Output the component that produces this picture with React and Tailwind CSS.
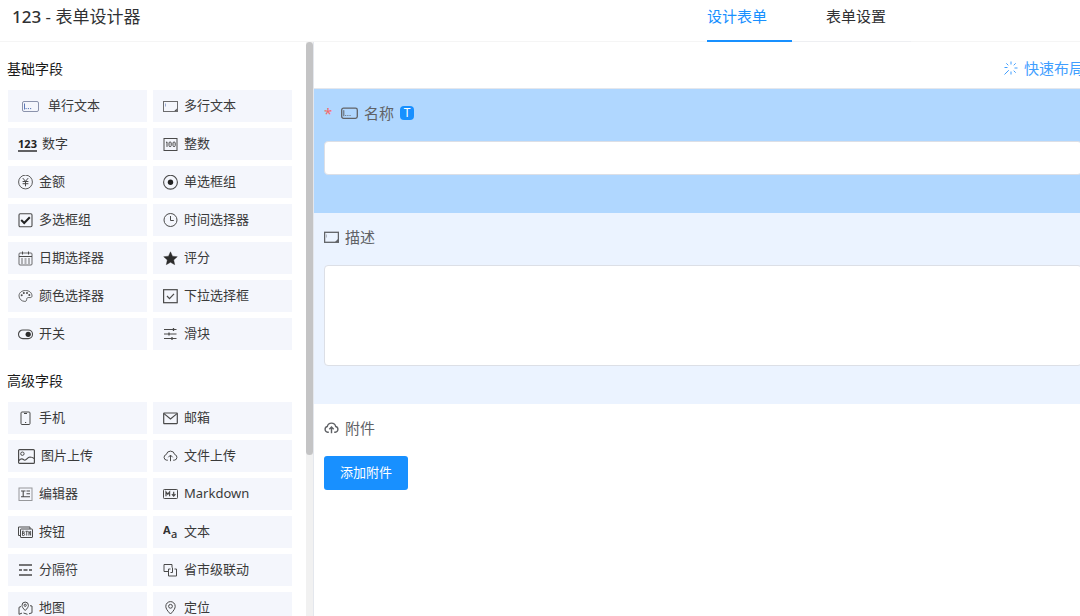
import React from "react";

function Svg({ w = 15, h = 15, children, className = "" }) {
  return (
    <svg
      aria-hidden="true"
      width={w}
      height={h}
      viewBox={`0 0 ${w} ${h}`}
      fill="none"
      stroke="currentColor"
      strokeWidth="1"
      className={`shrink-0 ${className}`}
    >
      {children}
    </svg>
  );
}

const SingleLineWide = () => (
  <Svg w={24} h={15}>
    <rect x="4.5" y="2.5" width="16" height="10" rx="1.5" stroke="#8b93ac" />
    <path d="M6.5 4.5v6" stroke="#5b78b8" />
    <path d="M7.5 9.6h1.2M9.8 9.6h1.2M12 9.6h1.2" stroke="#5b78b8" />
  </Svg>
);

const SingleLine = () => (
  <Svg w={17} h={15}>
    <rect x="0.7" y="2.2" width="15.6" height="10.2" rx="1.8" strokeWidth="1.3" />
    <path d="M2.8 4.2v6" />
    <path d="M4 9.5h1.3M6.2 9.5h1.3M8.4 9.5h1.3" strokeOpacity="0.7" />
  </Svg>
);

const MultiLine = () => (
  <Svg>
    <rect x="0.5" y="2.5" width="14" height="10" strokeOpacity="0.8" />
    <path d="M2.5 4.5v3" strokeOpacity="0.6" stroke="#5b78b8" />
    <path d="M13.8 9.6v2.4h-2.4z" fill="currentColor" stroke="none" />
  </Svg>
);

const MultiLineBold = () => (
  <Svg>
    <rect x="0.6" y="2.3" width="13.8" height="10" strokeWidth="1.3" />
    <path d="M2.5 4.5v3" strokeOpacity="0.4" />
    <path d="M14 9v3h-3z" fill="currentColor" stroke="none" />
  </Svg>
);

const NumberIcon = () => (
  <Svg w={20} h={17} className="-mr-0.5 text-[#222]">
    <text
      x="9.5"
      y="12"
      textAnchor="middle"
      fontFamily="'Open Sans', sans-serif"
      fontSize="11"
      fontWeight="700"
      fill="currentColor"
      stroke="none"
    >
      123
    </text>
    <path d="M0 15h19" strokeWidth="1.4" />
  </Svg>
);

const IntegerIcon = () => (
  <Svg>
    <rect x="1" y="1.5" width="13" height="12" />
    <path d="M3 5.6l1-.7v5" />
    <rect x="6" y="5" width="2.2" height="4.6" rx="1" />
    <rect x="10" y="5" width="2.2" height="4.6" rx="1" />
  </Svg>
);

const MoneyIcon = () => (
  <Svg>
    <circle cx="7.5" cy="7" r="6.900" strokeOpacity="0.9" />
    <path d="M4.8 3.1l2.7 3.2 2.7-3.2M4.6 6.500h5.8M4.6 8.700h5.8M7.5 6.300v5" />
  </Svg>
);

const RadioIcon = () => (
  <Svg>
    <circle cx="7.5" cy="7.2" r="6.9" strokeWidth="1.1" />
    <circle cx="7.5" cy="7.2" r="2.7" fill="#222" stroke="none" />
  </Svg>
);

const CheckboxIcon = () => (
  <Svg>
    <rect x="1" y="0.800" width="13" height="13" rx="1.2" strokeWidth="1.1" />
    <path d="M3.2 7l3 3 5.6-5.8" strokeWidth="2" stroke="#222" />
  </Svg>
);

const ClockIcon = () => (
  <Svg>
    <circle cx="7.5" cy="7" r="6.5" />
    <path d="M7.5 3v4.5h3.3" />
  </Svg>
);

const CalendarIcon = () => (
  <Svg>
    <rect x="1" y="2" width="13" height="12" rx="1" strokeOpacity="0.8" />
    <path d="M1 5.5h13M4.5 0.5v3M10.500 0.5v3" />
    <path d="M3 8h9.500M3 10h9.500M3 12h9.500" strokeDasharray="2 1.5" strokeOpacity="0.8" />
  </Svg>
);

const StarIcon = () => (
  <Svg>
    <path
      d="M7.5 0.800l2 4.400 4.800.5-3.600 3.200 1 4.800-4.200-2.400-4.200 2.400 1-4.800L.7 5.700l4.800-.5z"
      fill="#2c2c2c"
      stroke="#2c2c2c"
      strokeWidth="0.4"
    />
  </Svg>
);

const PaletteIcon = () => (
  <Svg>
    <path d="M7.500 1.500C3.800 1.500 1 3.800 1 6.800s2.600 5.600 5.800 5.600c2.200 0 1.700-1.700 1.900-2.600.3-1.300 1.700-1.400 3.200-1.200 1.300.1 2.100-.5 2.100-1.700C14 3.700 11.200 1.500 7.500 1.500z" strokeOpacity="0.85" />
    <g fill="currentColor" stroke="none">
      <circle cx="3.700" cy="6.300" r="1" />
      <circle cx="5.800" cy="4" r="1" />
      <circle cx="9" cy="3.900" r="1" />
      <circle cx="11.300" cy="5.900" r="1" />
    </g>
  </Svg>
);

const SelectIcon = () => (
  <Svg>
    <rect x="0.600" y="0.700" width="13.600" height="13" strokeWidth="1.200" />
    <path d="M4 7l2.500 2.600 4.500-4.800" strokeWidth="1.200" />
  </Svg>
);

const SwitchIcon = () => (
  <Svg>
    <rect x="0.500" y="3" width="14" height="8.600" rx="4.300" strokeWidth="1.100" />
    <circle cx="10.200" cy="7.300" r="2.600" fill="#2c2c2c" stroke="none" />
  </Svg>
);

const SliderIcon = () => (
  <Svg>
    <path d="M1 2.500h12.500M1 7h12.500M1 11.500h12.500" strokeWidth="1.100" />
    <path d="M10.500 1v3M6 5.500v3M9 10v3" strokeWidth="1.300" />
  </Svg>
);

const PhoneIcon = () => (
  <Svg>
    <rect x="3" y="1" width="9" height="12.500" rx="1" />
    <path d="M6 2.500h3M7 11.500h1.200" />
  </Svg>
);

const MailIcon = () => (
  <Svg>
    <rect x="0.700" y="2" width="13.600" height="10.600" rx="0.500" strokeWidth="1.200" />
    <path d="M1 2.600l6.500 5.400L14 2.600" strokeWidth="1.200" />
  </Svg>
);

const ImageIcon = () => (
  <Svg w={17}>
    <rect x="0.600" y="0.600" width="15.800" height="13.800" rx="1" strokeWidth="1.200" />
    <circle cx="4.400" cy="4.700" r="1.700" />
    <path d="M1 11.500c2-2.300 3.500-1.800 4.800-.8 2.600 1.800 3-2.600 6.200-2.700 1.800 0 3 .7 4.300 1.600" strokeWidth="1.200" />
  </Svg>
);

const CloudIcon = ({ width = 1 }) => (
  <Svg>
    <path
      d="M4.800 11.200H3.700a2.900 2.900 0 0 1-.4-5.700 4.300 4.300 0 0 1 8.400 0 2.900 2.900 0 0 1-.4 5.700h-1.100"
      strokeWidth={width}
    />
    <path d="M7.500 12.200v-6M5.300 8.300l2.200-2.200 2.200 2.200" strokeWidth={width} />
  </Svg>
);

const EditorIcon = () => (
  <Svg>
    <rect x="1" y="1" width="13" height="12.500" strokeOpacity="0.550" />
    <path d="M3 4h4.500M5.200 4v5.500M8.500 4h3.500M8.500 6.700h3.500M3 9.700h9" strokeWidth="1.100" />
  </Svg>
);

const MarkdownIcon = () => (
  <Svg>
    <rect x="0.500" y="2.500" width="14" height="9" rx="0.800" />
    <path d="M3 9.300V5l1.800 2.200 1.800-2.200v4.300" strokeWidth="1.200" />
    <path d="M10.700 4.700v4.200M8.900 7.200l1.800 1.900 1.800-1.900" strokeWidth="1.200" />
  </Svg>
);

const ButtonIcon = () => (
  <Svg>
    <path d="M2.500 10.500H.5v-8.500h11.500v2" />
    <rect x="2.500" y="4" width="12" height="8.500" rx="0.500" />
    <path d="M4.500 6v4.500h1.300c1.200 0 1-2.200 0-2.200H4.500h1c1 0 1-2.100 0-2.100zM7.500 6.300h2.400M8.700 6.300v4.300M10.900 10.600V6.300l1.700 4V6" strokeWidth="0.900" />
  </Svg>
);

const TextIcon = () => (
  <Svg w={15} h={22}>
    <g fill="#333" stroke="none" fontFamily="'Noto Sans', sans-serif">
      <text x="0" y="13" fontSize="11" fontWeight="700">
        A
      </text>
      <text x="8" y="17" fontSize="11" fontWeight="500">
        a
      </text>
    </g>
  </Svg>
);

const DividerIcon = () => (
  <Svg>
    <path d="M1 2h13M1 12h13" strokeWidth="1.400" />
    <path d="M1 7h3M5.500 7h4M11 7h3" strokeWidth="1.400" />
  </Svg>
);

const LinkageIcon = () => (
  <Svg>
    <path d="M5 8.500H1v-7h8v3" />
    <path d="M7.500 9.500h2v-5M7.500 6H5.500v7h8V6h-2" />
  </Svg>
);

const MapIcon = () => (
  <Svg>
    <path d="M7.200 9.500C5 7.300 4 5.900 4 4.300a3.200 3.200 0 0 1 6.400 0c0 1.600-1 3-3.200 5.200z" />
    <circle cx="7.200" cy="4.300" r="1.100" />
    <path d="M3 5.500L1 6.300v7l3-1.200M5.500 12l4 1.300M11 12.800l3-1V5l-2-.3" />
  </Svg>
);

const PinIcon = () => (
  <Svg>
    <path d="M7.500 13C4.300 9.800 2.800 7.500 2.800 5.300a4.700 4.700 0 0 1 9.400 0c0 2.200-1.500 4.500-4.700 7.700z" />
    <circle cx="7.500" cy="5.300" r="1.900" />
  </Svg>
);

const SparkIcon = () => (
  <Svg w={14} h={14}>
    <path d="M7 0.500v3M7 10.500v3M10.500 7h3M0.500 6.500h3M9.700 4.300l2-2M9.700 9.700l2 2M4.300 4.300l-2-2M4.800 9.200L0.500 13.500" />
  </Svg>
);

const groups = [
  {
    title: "基础字段",
    items: [
      ["单行文本", SingleLineWide],
      ["多行文本", MultiLine],
      ["数字", NumberIcon],
      ["整数", IntegerIcon],
      ["金额", MoneyIcon],
      ["单选框组", RadioIcon],
      ["多选框组", CheckboxIcon],
      ["时间选择器", ClockIcon],
      ["日期选择器", CalendarIcon],
      ["评分", StarIcon],
      ["颜色选择器", PaletteIcon],
      ["下拉选择框", SelectIcon],
      ["开关", SwitchIcon],
      ["滑块", SliderIcon],
    ],
  },
  {
    title: "高级字段",
    items: [
      ["手机", PhoneIcon],
      ["邮箱", MailIcon],
      ["图片上传", ImageIcon],
      ["文件上传", CloudIcon],
      ["编辑器", EditorIcon],
      ["Markdown", MarkdownIcon],
      ["按钮", ButtonIcon],
      ["文本", TextIcon],
      ["分隔符", DividerIcon],
      ["省市级联动", LinkageIcon],
      ["地图", MapIcon],
      ["定位", PinIcon],
    ],
  },
];

function FieldGroup({ title, items }) {
  return (
    <section>
      <h2 className="mb-[9px] px-[7px] text-sm leading-6 text-[#1a1a1a]">{title}</h2>
      <div className="grid grid-cols-2 gap-1.5 pr-3.5 pl-2">
        {items.map(([name, Icon]) => (
          <button
            key={name}
            type="button"
            className="flex h-8 cursor-move items-center gap-1.5 bg-[#f4f6fc] px-2.5 text-[13px] whitespace-nowrap text-[#4a4a4a]"
          >
            <Icon />
            <span className="text-[#3a3a3a]">{name}</span>
          </button>
        ))}
      </div>
    </section>
  );
}

export default function App() {
  return (
    <div className="flex h-screen flex-col overflow-hidden bg-white font-['Noto_Sans','Noto_Sans_CJK_SC',sans-serif] text-[#333]">
      <header className="flex h-[42px] shrink-0 items-stretch border-b border-[#f5f5f5]">
        <h1 className="pl-3 text-[17px] leading-[34px] whitespace-nowrap text-[#303133]">
          <span className="font-medium">123</span> - 表单设计器
        </h1>
        <nav className="mr-[169px] -mb-px ml-auto flex text-[15px] leading-8 whitespace-nowrap">
          <a href="#design" aria-current="page" className="border-b-2 border-[#1890ff] pr-[25px] text-[#1890ff]">
            设计表单
          </a>
          <a href="#settings" className="border-b border-[#eeeff2] pr-[25px] pl-[34px] text-[#303133]">
            表单设置
          </a>
        </nav>
      </header>

      <div className="flex min-h-0 flex-1">
        <aside className="flex w-[313px] shrink-0">
          <div className="flex min-w-0 flex-1 flex-col gap-[19px] overflow-hidden pt-[15px]">
            {groups.map((group) => (
              <FieldGroup key={group.title} {...group} />
            ))}
          </div>
          <div className="w-[7px] bg-[#f1f1f1]">
            <div className="h-[72%] rounded-sm bg-[#c4c4c5]" />
          </div>
        </aside>

        <main className="min-w-0 flex-1 overflow-hidden border-l border-[#e4e7ed]">
          <div className="-mr-1 flex h-[47px] items-center justify-end border-b border-[#e4e7ed] pt-1.5">
            <button type="button" className="flex items-center gap-1.5 text-[15px] whitespace-nowrap text-[#409eff]">
              <SparkIcon />
              快速布局
            </button>
          </div>

          <div className="-mr-3 bg-[#b0d7ff] px-2.5 pt-3 pb-[38px]">
            <label htmlFor="name" className="flex h-6 items-center gap-1.5 text-[15px] text-[#606266]">
              <span className="w-[11px] text-[#f56c6c]">*</span>
              <SingleLine />
              <span>名称</span>
              <span className="flex h-3.5 w-3.5 items-center justify-center rounded-sm bg-[#1890ff] text-xs leading-none text-white">
                T
              </span>
            </label>
            <input
              id="name"
              type="text"
              className="mt-4 block h-[34px] w-full rounded border border-[#dcdfe6] bg-white px-3 text-sm outline-none"
            />
          </div>

          <div className="-mr-3 bg-[#ebf3ff] px-2.5 pt-3 pb-[38px]">
            <label htmlFor="description" className="flex h-6 items-center gap-1.5 text-[15px] text-[#606266]">
              <MultiLineBold />
              <span>描述</span>
            </label>
            <textarea
              id="description"
              className="mt-4 block h-[101px] w-full resize-none rounded border border-[#dcdfe6] bg-white px-3 py-2 text-sm outline-none"
            />
          </div>

          <div className="px-2.5 pt-3">
            <div className="flex h-6 items-center gap-1.5 text-[15px] text-[#606266]">
              <CloudIcon width={1.4} />
              <span>附件</span>
            </div>
            <button type="button" className="mt-4 h-[34px] rounded-[3px] bg-[#1890ff] px-4 text-[13px] text-white">
              添加附件
            </button>
          </div>
        </main>
      </div>
    </div>
  );
}
